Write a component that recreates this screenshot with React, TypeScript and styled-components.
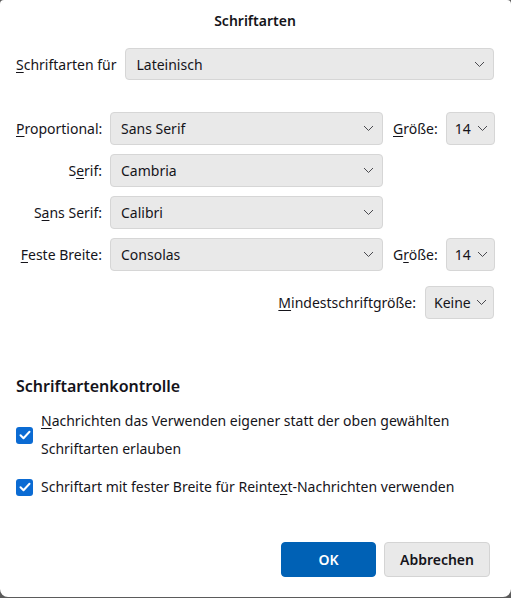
import React from "react";
import styled, { createGlobalStyle } from "styled-components";

const Global = createGlobalStyle`
  html, body {
    margin: 0;
    padding: 0;
    background: #5b5b5b;
    width: 511px;
    height: 598px;
    overflow: hidden;
  }
  body {
    font-family: "Noto Sans", "Open Sans", sans-serif;
    font-size: 14px;
    color: #15141a;
  }
`;

const Dialog = styled.div`
  box-sizing: border-box;
  width: 511px;
  height: 597px;
  background: #ffffff;
  border-radius: 4px 4px 8px 8px;
  padding: 9px 17px 20px 16px;
  display: flex;
  flex-direction: column;
`;

const Title = styled.h1`
  margin: 0;
  font-size: 14px;
  font-weight: 600;
  text-align: center;
  line-height: 24px;
`;

const LangRow = styled.div`
  display: flex;
  align-items: center;
  gap: 9px;
  margin-top: 15px;
`;

const Label = styled.label<{ $right?: boolean }>`
  white-space: nowrap;
  text-align: ${(p) => (p.$right ? "right" : "left")};
`;

const Key = styled.span`
  text-decoration: underline;
  text-underline-offset: 2px;
`;

const Select = styled.div<{ $w?: number; $h?: number }>`
  box-sizing: border-box;
  ${(p) => (p.$w ? `width: ${p.$w}px;` : "flex: 1;")}
  height: ${(p) => p.$h ?? 33}px;
  background: #e9e9e9;
  border: 1px solid #d6d6d6;
  border-radius: 4px;
  display: flex;
  align-items: center;
  justify-content: space-between;
  padding: 0 8px 0 10px;
  white-space: nowrap;
`;

const SmallSelect = styled(Select)`
  padding: 0 6px 0 8px;
  gap: 3px;
`;

const Grid = styled.div`
  display: grid;
  grid-template-columns: 86px 273px auto 49px;
  column-gap: 8px;
  row-gap: 9px;
  align-items: center;
  margin-top: 32px;
  & > label:nth-child(4n + 3) {
    margin-left: 2px;
  }
`;

const MinRow = styled.div`
  display: flex;
  justify-content: flex-end;
  align-items: center;
  gap: 9px;
  margin-top: 15px;
`;

const Heading = styled.h2`
  margin: 56px 0 0;
  font-size: 16px;
  font-weight: 600;
  line-height: 22px;
`;

const CheckRow = styled.div<{ $top: number }>`
  display: flex;
  align-items: center;
  gap: 8px;
  margin-top: ${(p) => p.$top}px;
`;

const Box = styled.span`
  flex: none;
  width: 17px;
  height: 17px;
  border-radius: 3px;
  background: #0b6bd3;
  display: flex;
  align-items: center;
  justify-content: center;
`;

const CheckText = styled.span`
  line-height: 28px;
`;

const Footer = styled.div`
  margin-top: auto;
  display: flex;
  justify-content: flex-end;
  gap: 8px;
  padding-right: 4px;
`;

const Button = styled.button<{ $primary?: boolean }>`
  box-sizing: border-box;
  height: 35px;
  min-width: ${(p) => (p.$primary ? 95 : 106)}px;
  border-radius: 4px;
  font-family: inherit;
  font-size: 14px;
  font-weight: 600;
  border: 1px solid ${(p) => (p.$primary ? "#0061b5" : "#d4d4d4")};
  background: ${(p) => (p.$primary ? "#0061b5" : "#e9e9e9")};
  color: ${(p) => (p.$primary ? "#ffffff" : "#15141a")};
  padding: 0 14px;
`;

const Chevron = () => (
  <svg width="11" height="7" viewBox="0 0 11 7" fill="none">
    <path d="M1 1l4.5 4.5L10 1" stroke="#4a4a4f" strokeWidth="1" />
  </svg>
);

const Tick = () => (
  <svg width="12" height="10" viewBox="0 0 12 10" fill="none">
    <path d="M1.5 5.2l3 3L10.5 1.8" stroke="#fff" strokeWidth="2" strokeLinecap="round" strokeLinejoin="round" />
  </svg>
);

export default function App() {
  return (
    <>
      <Global />
      <Dialog>
        <Title>Schriftarten</Title>
        <LangRow>
          <Label>
            <Key>S</Key>chriftarten für
          </Label>
          <Select $h={32}>
            Lateinisch
            <Chevron />
          </Select>
        </LangRow>

        <Grid>
          <Label $right>
            <Key>P</Key>roportional:
          </Label>
          <Select>
            Sans Serif
            <Chevron />
          </Select>
          <Label>
            <Key>G</Key>röße:
          </Label>
          <SmallSelect>
            14
            <Chevron />
          </SmallSelect>

          <Label $right>
            S<Key>e</Key>rif:
          </Label>
          <Select>
            Cambria
            <Chevron />
          </Select>
          <span />
          <span />

          <Label $right>
            S<Key>a</Key>ns Serif:
          </Label>
          <Select>
            Calibri
            <Chevron />
          </Select>
          <span />
          <span />

          <Label $right>
            <Key>F</Key>este Breite:
          </Label>
          <Select>
            Consolas
            <Chevron />
          </Select>
          <Label>
            G<Key>r</Key>öße:
          </Label>
          <SmallSelect>
            14
            <Chevron />
          </SmallSelect>
        </Grid>

        <MinRow>
          <Label>
            <Key>M</Key>indestschriftgröße:
          </Label>
          <SmallSelect $w={69}>
            Keine
            <Chevron />
          </SmallSelect>
        </MinRow>

        <Heading>Schriftartenkontrolle</Heading>
        <CheckRow $top={10}>
          <Box>
            <Tick />
          </Box>
          <CheckText>
            <Key>N</Key>achrichten das Verwenden eigener statt der oben gewählten
            <br />
            Schriftarten erlauben
          </CheckText>
        </CheckRow>
        <CheckRow $top={10}>
          <Box>
            <Tick />
          </Box>
          <CheckText>
            Schriftart mit fester Breite für Reinte<Key>x</Key>t-Nachrichten verwenden
          </CheckText>
        </CheckRow>

        <Footer>
          <Button $primary>OK</Button>
          <Button>Abbrechen</Button>
        </Footer>
      </Dialog>
    </>
  );
}
